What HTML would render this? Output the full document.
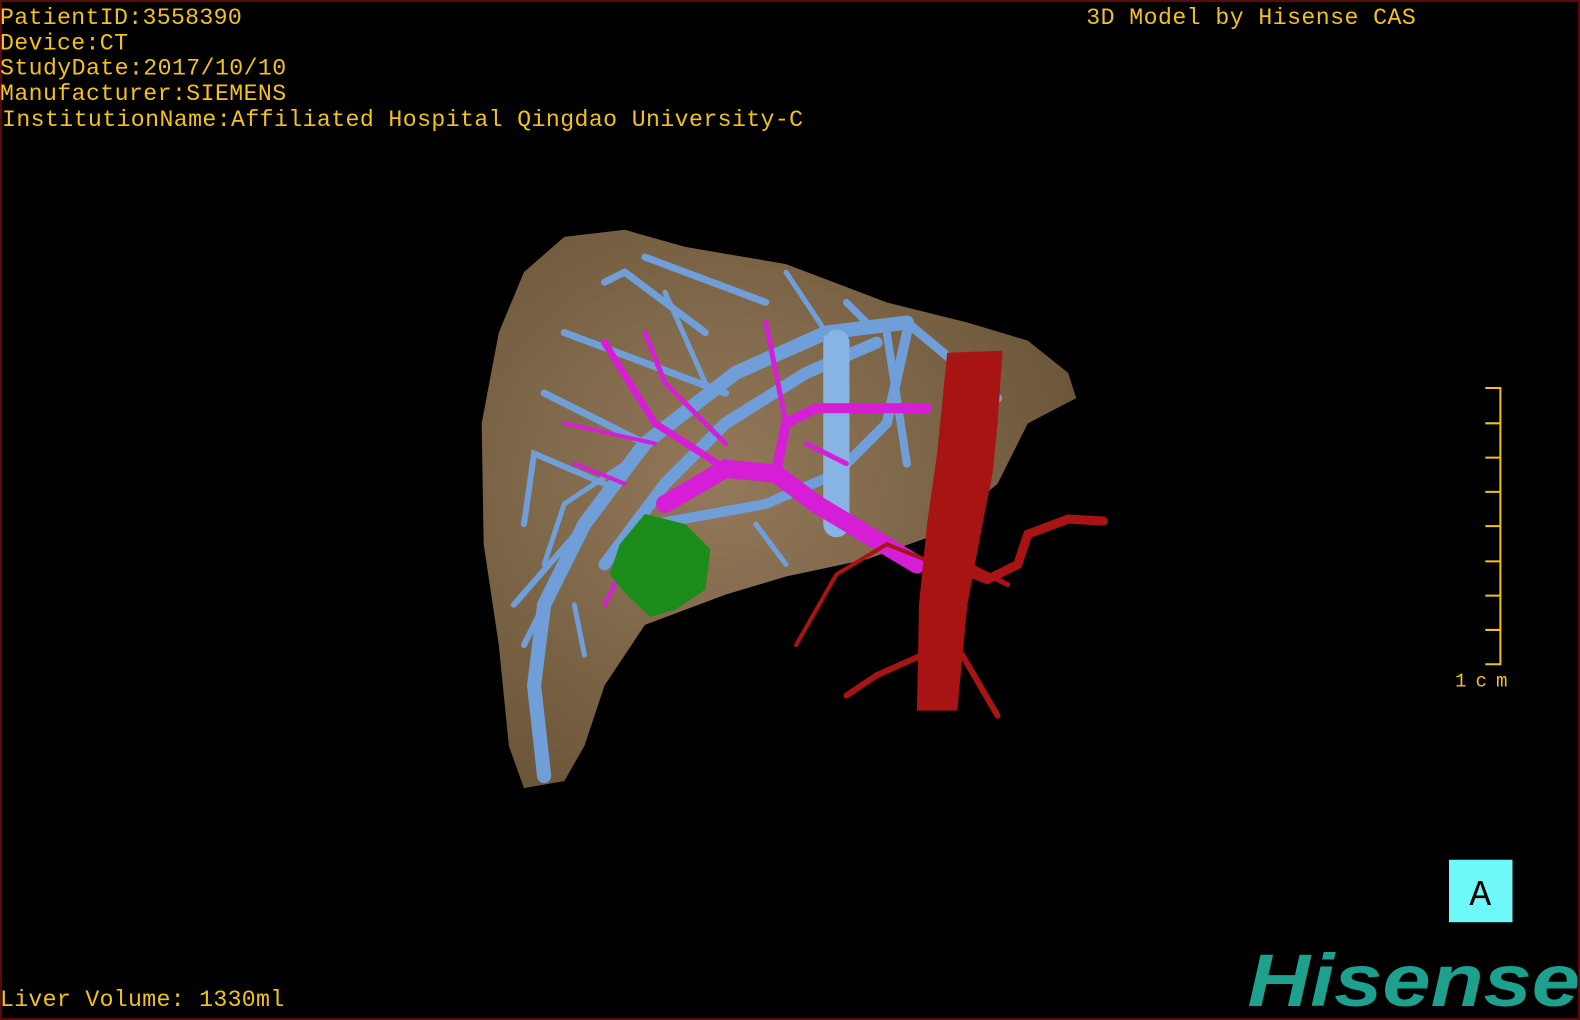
<!DOCTYPE html>
<html><head><style>
html,body{margin:0;padding:0;background:#000;width:1580px;height:1020px;overflow:hidden}
svg{display:block}
</style></head><body>
<svg width="1580" height="1020" viewBox="0 0 1568 1012" preserveAspectRatio="none" xmlns="http://www.w3.org/2000/svg">
<rect x="0" y="0" width="1568" height="1012" fill="#000"/>
<rect x="1" y="1" width="1566" height="1010" fill="none" stroke="#5a0a0a" stroke-width="2"/>
<g font-family="'Liberation Mono',monospace" font-size="23" fill="#f2c21a">
<text x="0" y="24" textLength="240">PatientID:3558390</text>
<text x="0" y="49" textLength="127">Device:CT</text>
<text x="0" y="74" textLength="284">StudyDate:2017/10/10</text>
<text x="0" y="99" textLength="284">Manufacturer:SIEMENS</text>
<text x="2" y="125" textLength="795">InstitutionName:Affiliated Hospital Qingdao University-C</text>
<text x="1078" y="24" textLength="327">3D Model by Hisense CAS</text>
<text x="0" y="998" textLength="282">Liver Volume: 1330ml</text>
<text x="1444" y="681" font-size="19" textLength="52">1cm</text>
</g>
<g stroke="#f2c21a" stroke-width="2" fill="none">
<path d="M1489 384V660"/>
<path d="M1474 385H1489M1474 420H1489M1474 454H1489M1474 488H1489M1474 522H1489M1474 557H1489M1474 591H1489M1474 625H1489M1474 659H1489"/>
</g>
<defs><radialGradient id="lv" cx="0.4" cy="0.45" r="0.65"><stop offset="0" stop-color="#94795a"/><stop offset="1" stop-color="#6a5538"/></radialGradient></defs>
<path d="M560 235 L620 228 L680 245 L780 262 L880 300 L960 320 L1020 338 L1060 370 L1068 395 L1020 420 L990 480 L930 530 L860 555 L780 572 L720 590 L640 620 L600 680 L580 740 L560 775 L520 782 L505 740 L495 640 L480 540 L478 420 L495 330 L520 270 Z" fill="url(#lv)"/>
<g stroke="#6f9ed8" fill="none" stroke-linecap="round">
<path d="M540 770 L530 680 L540 600 L580 520 L640 440 L730 370 L820 330 L900 320" stroke-width="14"/>
<path d="M600 560 L660 480 L720 420 L800 370 L870 340" stroke-width="12"/>
<path d="M650 520 L760 500 L830 470 L880 420 L900 330" stroke-width="10"/>
<path d="M830 340 L830 520" stroke-width="26" stroke="#88b4e4"/>
<path d="M900 320 L990 395" stroke-width="9"/>
<path d="M880 330 L900 460" stroke-width="8"/>
<path d="M700 330 L620 270 L600 280" stroke-width="7"/>
<path d="M760 300 L640 255" stroke-width="7"/>
<path d="M720 390 L560 330" stroke-width="7"/>
<path d="M640 440 L540 390" stroke-width="7"/>
<path d="M600 480 L530 450 L520 520" stroke-width="6"/>
<path d="M580 520 L510 600" stroke-width="6"/>
<path d="M560 560 L520 640" stroke-width="6"/>
<path d="M620 460 L560 500 L540 560" stroke-width="5"/>
<path d="M700 380 L660 290" stroke-width="5"/>
<path d="M820 330 L780 270" stroke-width="5"/>
<path d="M860 320 L840 300" stroke-width="7"/>
<path d="M750 520 L780 560" stroke-width="5"/>
<path d="M570 600 L580 650" stroke-width="5"/>
</g>
<g stroke="#d61ed6" fill="none" stroke-linecap="round">
<path d="M660 500 L720 465 L770 470 L810 500 L860 530 L910 560" stroke-width="18"/>
<path d="M770 470 L780 420 L810 405 L920 405" stroke-width="10"/>
<path d="M720 465 L650 420 L600 340" stroke-width="7"/>
<path d="M720 440 L660 380 L640 330" stroke-width="5"/>
<path d="M780 420 L760 320" stroke-width="5"/>
<path d="M650 440 L560 420" stroke-width="4"/>
<path d="M620 480 L570 460" stroke-width="4"/>
<path d="M640 520 L600 600" stroke-width="4"/>
<path d="M800 440 L840 460" stroke-width="5"/>
</g>
<path d="M615 540 L640 510 L680 520 L705 545 L700 585 L670 605 L645 612 L622 590 L605 570 Z" fill="#1a8c1a"/>
<path d="M940 350 L995 348 L990 420 L985 470 L975 520 L960 600 L950 705 L910 705 L912 600 L920 520 L930 450 Z" fill="#a81414"/>
<g stroke="#a81414" fill="none" stroke-linecap="round">
<path d="M940 560 L980 575 L1010 560 L1020 530 L1060 515 L1095 517" stroke-width="9"/>
<path d="M930 560 L880 540 L830 570 L790 640" stroke-width="4"/>
<path d="M915 650 L870 670 L840 690" stroke-width="6"/>
<path d="M955 650 L990 710" stroke-width="6"/>
<path d="M960 560 L1000 580" stroke-width="5"/>
</g>
<rect x="1438" y="853" width="63" height="62" fill="#6ff8f8"/>
<text x="1469" y="898" font-family="'Liberation Mono',monospace" font-size="36" text-anchor="middle" fill="#000">A</text>
<text x="1238" y="998" font-family="'Liberation Sans',sans-serif" font-weight="bold" font-style="italic" font-size="74" fill="#1ea08e" textLength="330" lengthAdjust="spacingAndGlyphs">Hisense</text>
</svg>
</body></html>
